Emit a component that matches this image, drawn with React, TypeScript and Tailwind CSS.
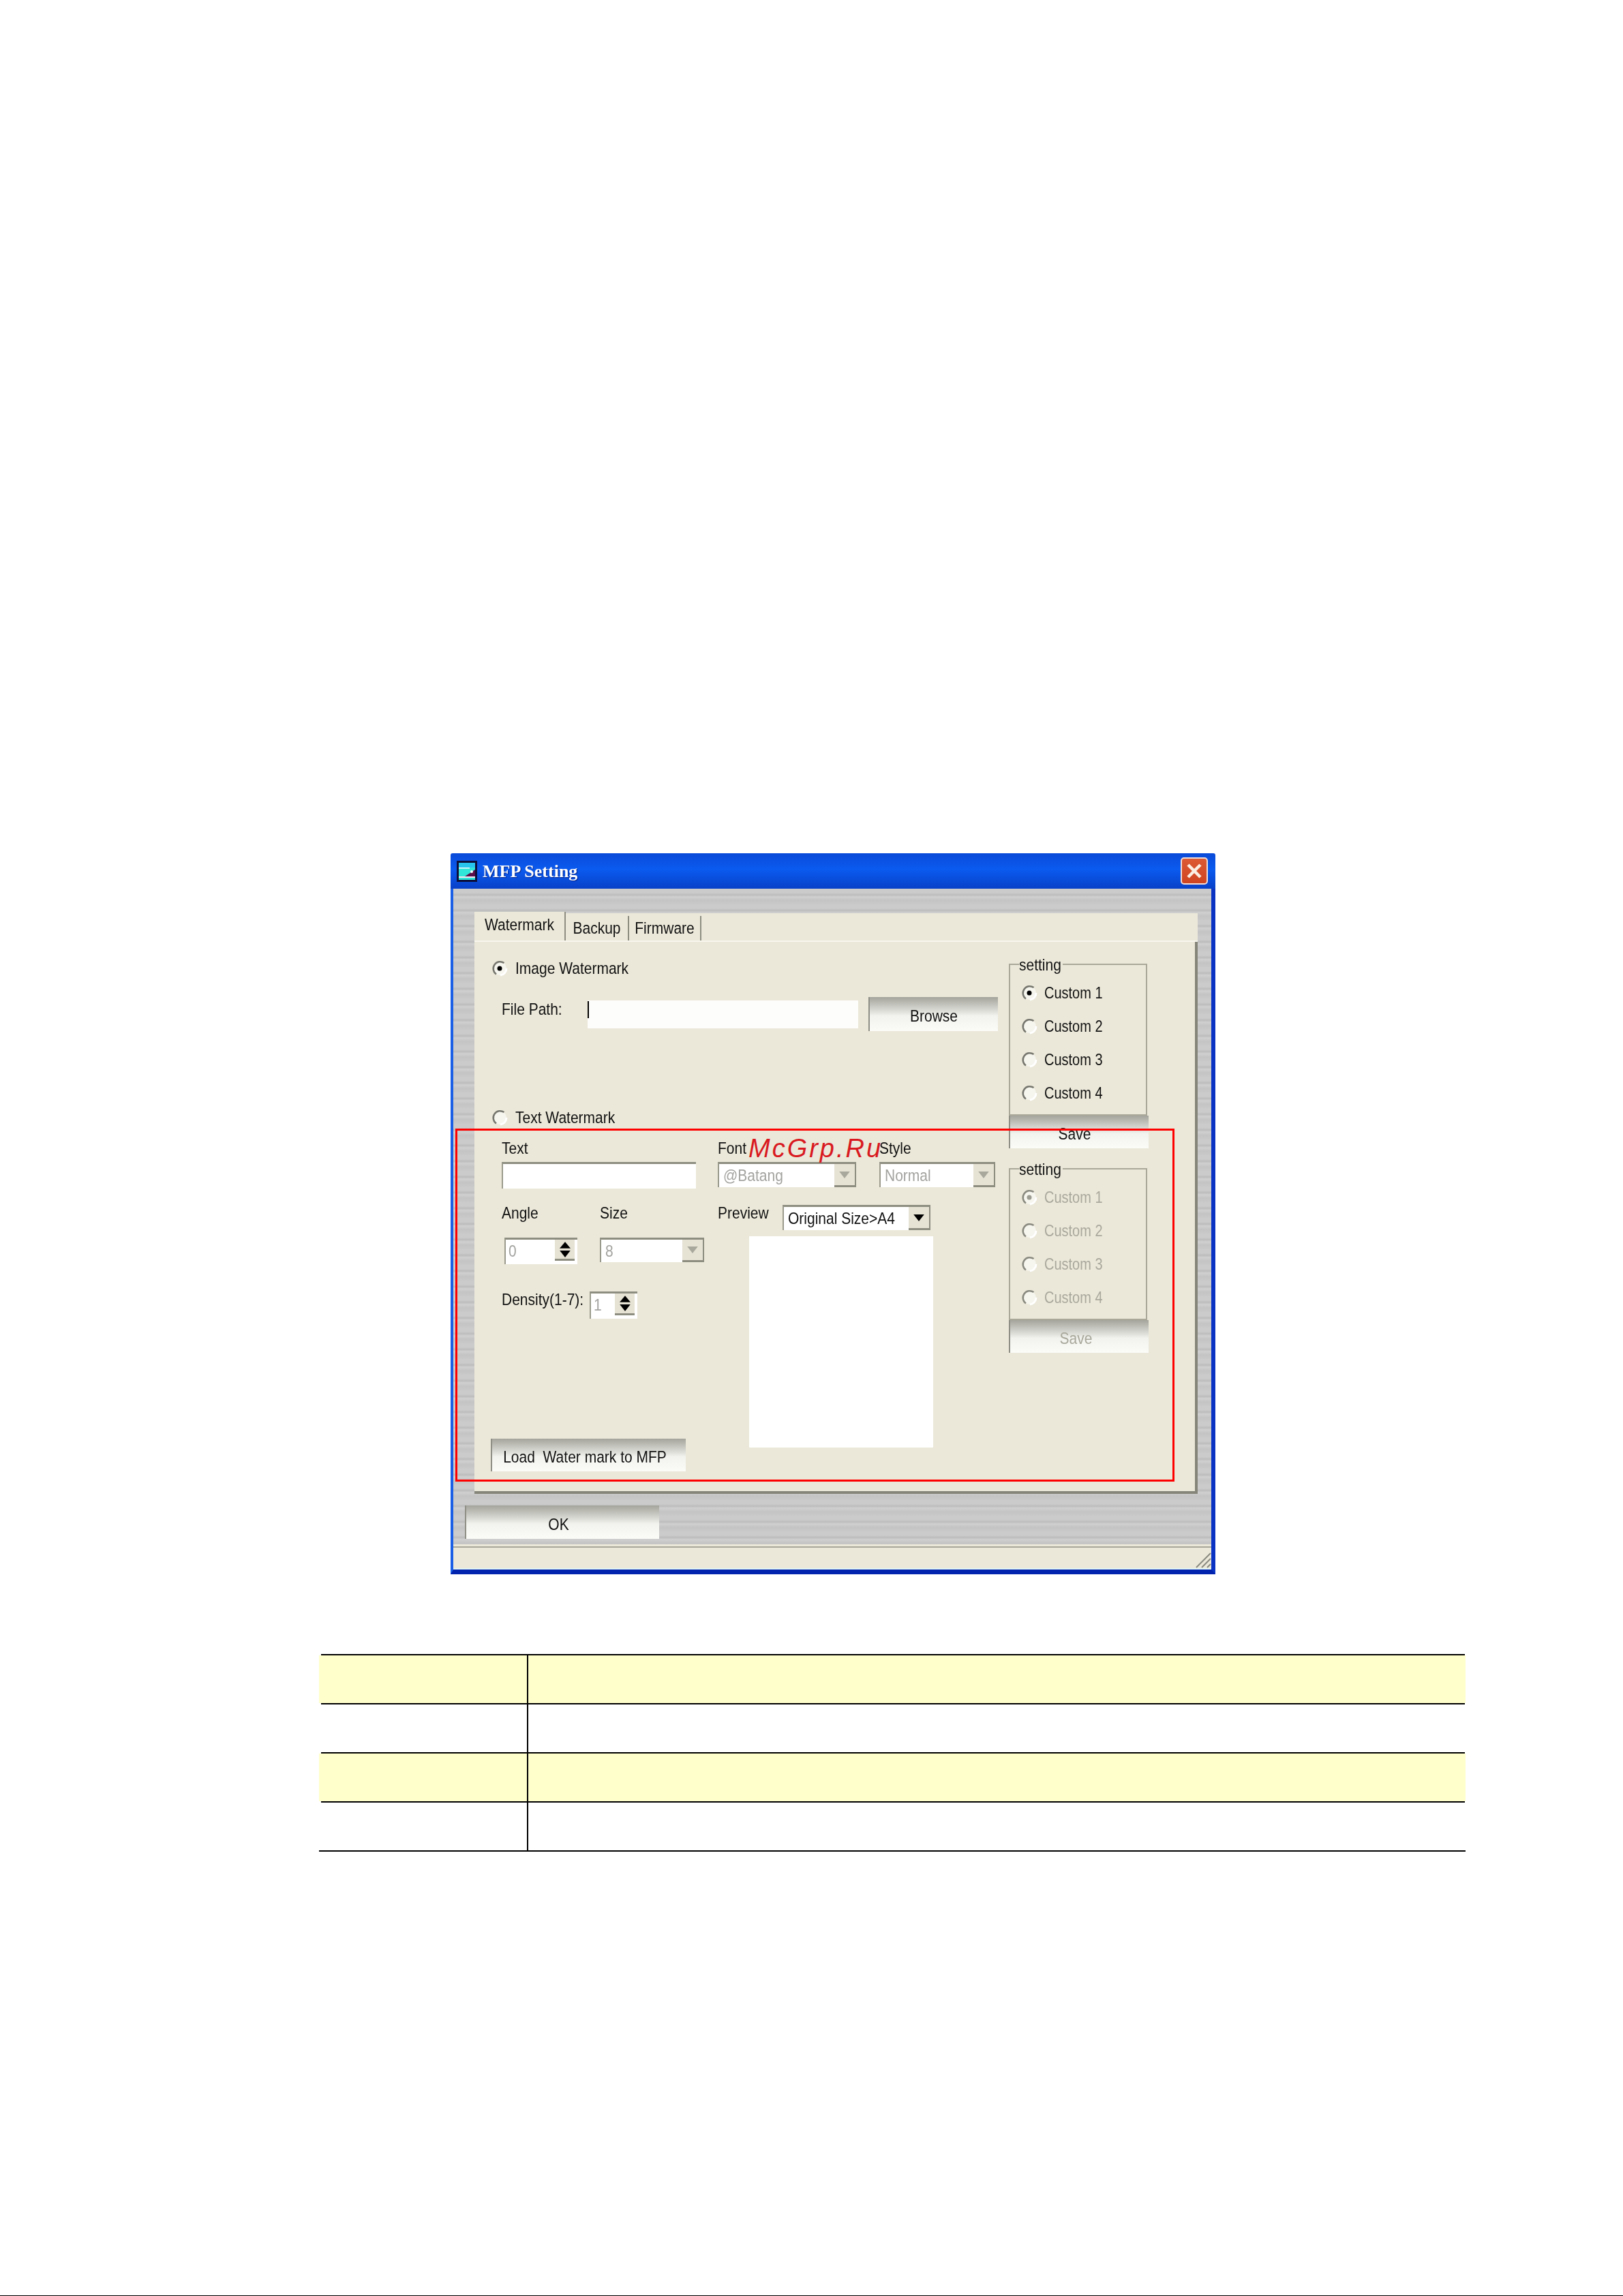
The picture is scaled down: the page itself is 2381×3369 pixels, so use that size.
const font = "font-['Liberation_Sans',Arial,sans-serif]"
const stripes =
  'bg-[repeating-linear-gradient(180deg,#cbcbcb_0px,#cbcbcb_6px,#bcbcbc_9px,#d0d0d0_12px,#c4c4c4_17px,#c9c9c9_23px)]'
const beige = 'bg-[#ebe8d9]'

// the screenshot's type is narrow and tall, so stretch it a bit
function Txt({ children, className = '' }: { children: React.ReactNode; className?: string }) {
  return <span className={`inline-block scale-y-[1.18] ${className}`}>{children}</span>
}

function Radio({ checked = false, disabled = false }: { checked?: boolean; disabled?: boolean }) {
  return (
    <svg width="24" height="24" viewBox="0 0 24 24" className="shrink-0">
      <circle cx="12" cy="12" r="10" fill="#f6f5ee" />
      <path d="M13 22a10 10 0 0 0 9-10" stroke="#ffffff" strokeWidth="3" fill="none" />
      <path
        d="M7 20.5A10 10 0 0 1 18.5 4"
        stroke={disabled ? '#8a8a80' : '#77776f'}
        strokeWidth="2.5"
        fill="none"
      />
      {checked && <circle cx="12" cy="12" r="3.5" fill={disabled ? '#9c9c92' : '#000000'} />}
    </svg>
  )
}

function Button({ label, className, muted }: { label: string; className: string; muted?: boolean }) {
  return (
    <div
      className={`flex shrink-0 items-center justify-center border-l-2 border-l-[#8f8f86] bg-gradient-to-b from-[#a4a49c] via-[#f2f2ee] via-55% to-[#fbfbf8] pt-[6px] text-[21px] ${
        muted ? 'text-[#a9a89c]' : 'text-[#111]'
      } ${className}`}
    >
      <Txt>{label}</Txt>
    </div>
  )
}

function Arrow({ color }: { color: string }) {
  return (
    <svg width="16" height="10" viewBox="0 0 14 9">
      <path d="M0 0h14L7 9z" fill={color} />
    </svg>
  )
}

function Combo({
  value,
  className,
  muted = true
}: {
  value: string
  className: string
  muted?: boolean
}) {
  return (
    <div
      className={`flex shrink-0 border-t-[3px] border-l-[2px] border-t-[#8d8d80] border-l-[#9a9a8c] bg-white text-[21px] ${className}`}
    >
      <span className={`flex-1 pl-[6px] pt-[3px] leading-[28px] ${muted ? 'text-[#a3a3a0]' : 'text-[#111]'}`}>
        <Txt>{value}</Txt>
      </span>
      <span className="flex w-[32px] items-center justify-center border-r-[2px] border-b-[3px] border-r-[#8d8d80] border-b-[#8d8d80] bg-[#e6e3d4]">
        <Arrow color={muted ? '#a8a89c' : '#000000'} />
      </span>
    </div>
  )
}

function Spin({ value, className }: { value: string; className: string }) {
  return (
    <div className={`flex shrink-0 border-t-[3px] border-l-[2px] border-t-[#8d8d80] border-l-[#9a9a8c] bg-white pb-[5px] pr-[4px] text-[21px] ${className}`}>
      <span className="flex-1 pl-[4px] pt-[3px] leading-[28px] text-[#a3a3a0]">
        <Txt>{value}</Txt>
      </span>
      <span className="flex w-[29px] flex-col items-center justify-center gap-[3px] border-b-[3px] border-b-[#8d8d80] bg-[#e6e3d4]">
        <svg width="16" height="10" viewBox="0 0 15 9">
          <path d="M7.5 0L15 9H0z" fill="#000" />
        </svg>
        <Arrow color="#000000" />
      </span>
    </div>
  )
}

function SettingGroup({ disabled = false }: { disabled?: boolean }) {
  const items = ['Custom 1', 'Custom 2', 'Custom 3', 'Custom 4']
  return (
    <div>
      <div className="relative h-[223px] w-[203px] border-2 border-[#a9a899]">
        <span className={`absolute -top-[12px] left-[13px] ${beige} pr-[2px] text-[21px] leading-[24px] text-[#111]`}>
          <Txt>setting</Txt>
        </span>
        <div className="flex flex-col gap-[25px] pl-[16px] pt-[29px]">
          {items.map((item, i) => (
            <div key={item} className="flex h-[24px] items-center gap-[10px]">
              <Radio checked={i === 0} disabled={disabled} />
              <Txt className={`text-[20px] ${disabled ? 'text-[#a9a89c]' : 'text-[#111]'}`}>{item}</Txt>
            </div>
          ))}
        </div>
      </div>
      <Button label="Save" muted={disabled} className={`h-[48px] w-[205px] ${disabled ? 'pr-[10px]' : 'pr-[14px]'}`} />
    </div>
  )
}

function MfpWindow() {
  return (
    <div className="ml-[661px] mt-[1252px] h-[1058px] w-[1122px] shrink-0 blur-[0.6px]">
      <div className="flex h-[52px] items-center rounded-t-[3px] bg-gradient-to-b from-[#0a4ad8] via-[#0b5bf0] via-45% to-[#0840c8] pl-[9px] pr-[11px]">
        <svg width="30" height="31" viewBox="0 0 30 31" className="shrink-0">
          <rect width="30" height="31" fill="#0c0f3a" />
          <rect x="3" y="3" width="24" height="25" fill="#2fe6d8" />
          <path d="M3 3h24v7H3z" fill="#27c4ee" />
          <path d="M12 23l15-10v10z" fill="#5a0f4a" />
          <rect x="3" y="10" width="16" height="1.5" fill="#ffffff" />
          <circle cx="22" cy="16" r="2" fill="#ffffff" />
          <rect x="3" y="23" width="24" height="2" fill="#f4e8f4" />
        </svg>
        <span className="ml-[8px] font-['Liberation_Serif',serif] text-[26px] font-bold text-white [text-shadow:1px_1px_1px_#03238a]">
          MFP Setting
        </span>
        <div className="ml-auto flex h-[40px] w-[40px] items-center justify-center rounded-[5px] border-2 border-[#f2ddd6] bg-gradient-to-b from-[#dc5a34] to-[#cf4420]">
          <svg width="26" height="26" viewBox="0 0 26 26">
            <path d="M4 4l18 18M22 4L4 22" stroke="#fbeee2" strokeWidth="4.5" />
          </svg>
        </div>
      </div>

      <div
        className={`flex h-[1006px] flex-col border-b-[7px] border-l-[4px] border-r-[6px] border-b-[#0223ad] border-l-[#1a5fe6] border-r-[#0a33c4] ${stripes}`}
      >
        <div className="ml-[31px] mt-[36px] flex h-[852px] w-[1061px] flex-col">
          <div className="flex h-[42px] items-end border-b-2 border-b-[#f7f6ee] bg-[#ebe8da] text-[21px] text-[#111]">
            <div className={`flex h-[42px] w-[134px] items-center justify-center border-r-2 border-r-[#8d8d80] pb-[4px] ${beige}`}>
              <Txt>Watermark</Txt>
            </div>
            <div className={`flex h-[36px] w-[93px] items-center justify-center border-r-2 border-r-[#8d8d80] ${beige}`}>
              <Txt>Backup</Txt>
            </div>
            <div className={`flex h-[36px] w-[106px] items-center justify-center border-r-2 border-r-[#8d8d80] ${beige}`}>
              <Txt>Firmware</Txt>
            </div>
          </div>

          <div className={`flex flex-1 border-b-[4px] border-r-[4px] border-b-[#85857a] border-r-[#85857a] ${beige} text-[21px] text-[#111]`}>
            <div className="w-[784px] shrink-0">
              <div className="ml-[25px] mt-[27px] flex h-[24px] items-center gap-[11px]">
                <Radio checked />
                <Txt>Image Watermark</Txt>
              </div>
              <div className="ml-[40px] mt-[30px] flex h-[50px] items-center">
                <span className="-mt-[14px] w-[126px]">
                  <Txt>File Path:</Txt>
                </span>
                <div className="h-[41px] w-[397px] bg-[#fdfdfb] pt-[1px]">
                  <div className="h-[25px] w-[2px] bg-black" />
                </div>
                <Button label="Browse" className="ml-[15px] h-[50px] w-[190px]" />
              </div>
              <div className="ml-[25px] mt-[115px] flex h-[24px] items-center gap-[11px]">
                <Radio />
                <Txt>Text Watermark</Txt>
              </div>

              <div className="ml-[40px] mt-[21px] flex">
                <div className="w-[317px] shrink-0">
                  <div className="h-[24px] leading-[24px]">
                    <Txt>Text</Txt>
                  </div>
                  <div className="mt-[8px] h-[39px] w-[285px] border-l-[2px] border-t-[3px] border-l-[#9a9a8c] border-t-[#8d8d80] bg-white" />
                  <div className="mt-[24px] flex h-[24px] leading-[24px]">
                    <span className="w-[144px]">
                      <Txt>Angle</Txt>
                    </span>
                    <Txt>Size</Txt>
                  </div>
                  <div className="mt-[24px] flex h-[39px]">
                    <Spin value="0" className="ml-[4px] h-[39px] w-[107px]" />
                    <Combo value="8" className="ml-[33px] h-[36px] w-[153px]" />
                  </div>
                  <div className="mt-[40px] flex h-[40px]">
                    <span className="h-[24px] w-[129px] leading-[24px]">
                      <Txt>Density(1-7):</Txt>
                    </span>
                    <Spin value="1" className="h-[40px] w-[70px]" />
                  </div>
                  <Button label="Load  Water mark to MFP" className="-ml-[16px] mt-[176px] h-[48px] w-[286px] whitespace-pre pr-[12px]" />
                </div>
                <div className="flex-1">
                  <div className="flex h-[24px] leading-[24px]">
                    <span className="w-[237px]">
                      <Txt>Font</Txt>
                    </span>
                    <Txt>Style</Txt>
                  </div>
                  <div className="mt-[8px] flex h-[37px]">
                    <Combo value="@Batang" className="h-[37px] w-[203px]" />
                    <Combo value="Normal" className="ml-[34px] h-[37px] w-[170px]" />
                  </div>
                  <div className="mt-[26px] flex h-[37px]">
                    <span className="w-[95px] leading-[24px]">
                      <Txt>Preview</Txt>
                    </span>
                    <Combo value="Original Size>A4" muted={false} className="h-[37px] w-[217px]" />
                  </div>
                  <div className="ml-[46px] mt-[9px] h-[310px] w-[270px] bg-white" />
                </div>
              </div>
            </div>

            <div className="pt-[32px]">
              <SettingGroup />
              <div className="mt-[29px]">
                <SettingGroup disabled />
              </div>
            </div>
          </div>
        </div>

        <Button label="OK" className="ml-[17px] mt-[17px] h-[49px] w-[285px] pr-[12px]" />

        <div className={`mt-[8px] flex h-[37px] flex-col ${beige} border-b-2 border-b-[#dff4f4]`}>
          <div className="mt-[3px] h-[2px] bg-[#a8a698]" />
          <div className="flex flex-1 items-end justify-end">
            <svg width="24" height="24" viewBox="0 0 24 24">
              <path d="M2 23L23 2M10 23L23 10M18 23l5-5" stroke="#8a8a80" strokeWidth="2" />
            </svg>
          </div>
        </div>
      </div>
    </div>
  )
}

function InfoTable() {
  const rows = ['bg-[#ffffcc]', 'bg-white', 'bg-[#ffffcc]', 'bg-white']
  return (
    <div className="ml-[468px] mt-[117px] w-[1682px]">
      {rows.map((bg, i) => (
        <div key={i}>
          <div className="ml-[3px] mr-[1px] h-[2px] bg-black" />
          <div className={`h-[70px] ${bg}`}>
            <div className="h-full w-[307px] border-r-2 border-r-black" />
          </div>
        </div>
      ))}
      <div className="h-[2px] bg-black" />
    </div>
  )
}

export default function App() {
  return (
    <div className={`relative flex h-[3369px] w-[2381px] flex-col overflow-hidden bg-white ${font}`}>
      <MfpWindow />
      <InfoTable />
      <div className="mt-auto h-px bg-black" />

      {/* red annotation box + site watermark sit on top of the screenshot */}
      <div className="absolute left-[668px] top-[1656px] h-[518px] w-[1055px] border-[3px] border-[#ff0000]" />
      <span className="absolute left-[1098px] top-[1659px] text-[38px] italic leading-[52px] tracking-[3px] text-[#d9191f]">
        McGrp.Ru
      </span>
    </div>
  )
}
